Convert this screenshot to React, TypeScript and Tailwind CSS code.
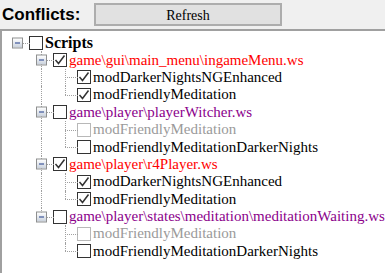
import React from "react";

type Node = {
  label: string;
  checked?: boolean;
  tone?: "red" | "purple" | "gray" | "black";
  children?: Node[];
};

const scripts: Node[] = [
  {
    label: "game\\gui\\main_menu\\ingameMenu.ws",
    checked: true,
    tone: "red",
    children: [
      { label: "modDarkerNightsNGEnhanced", checked: true },
      { label: "modFriendlyMeditation", checked: true },
    ],
  },
  {
    label: "game\\player\\playerWitcher.ws",
    tone: "purple",
    children: [
      { label: "modFriendlyMeditation", tone: "gray" },
      { label: "modFriendlyMeditationDarkerNights" },
    ],
  },
  {
    label: "game\\player\\r4Player.ws",
    checked: true,
    tone: "red",
    children: [
      { label: "modDarkerNightsNGEnhanced", checked: true },
      { label: "modFriendlyMeditation", checked: true },
    ],
  },
  {
    label: "game\\player\\states\\meditation\\meditationWaiting.ws",
    tone: "purple",
    children: [
      { label: "modFriendlyMeditation", tone: "gray" },
      { label: "modFriendlyMeditationDarkerNights" },
    ],
  },
];

const toneClass = {
  red: "text-[#ff0000]",
  purple: "text-[#8b008b]",
  gray: "text-[#9a9a9a]",
  black: "text-black",
};

function Expander() {
  return (
    <div className="flex h-[11px] w-[11px] items-center justify-center border border-[#8e8f8f] bg-gradient-to-b from-white to-[#c9d1dc]">
      <div className="h-px w-[5px] bg-[#1f3a8a]" />
    </div>
  );
}

function Check({ checked, dim }: { checked?: boolean; dim?: boolean }) {
  return (
    <div
      className={`flex h-[14px] w-[14px] shrink-0 items-center justify-center border bg-white ${
        dim ? "border-[#b8b8b8]" : "border-[#333333]"
      }`}
    >
      {checked && (
        <svg width="12" height="12" viewBox="0 0 12 12">
          <path d="M1.5 6 L4.5 9.5 L10.5 1.5" fill="none" stroke="#333" strokeWidth="1.5" />
        </svg>
      )}
    </div>
  );
}

// one 24px indent cell: optional vertical line (full / top half) and horizontal stub
function Cell({
  vert,
  half,
  stub,
  expander,
}: {
  vert?: boolean;
  half?: boolean;
  stub?: boolean;
  expander?: boolean;
}) {
  return (
    <div className="relative h-full w-[24px] shrink-0">
      {vert && (
        <div
          className={`absolute left-[12px] top-0 border-l border-dotted border-[#a0a0a0] ${
            half ? "h-1/2" : "h-full"
          }`}
        />
      )}
      {stub && <div className="absolute left-[12px] top-1/2 w-[13px] border-t border-dotted border-[#a0a0a0]" />}
      {expander && (
        <div className="absolute left-[7px] top-1/2 -translate-y-1/2 bg-white">
          <Expander />
        </div>
      )}
    </div>
  );
}

function Row({ cells, node, bold }: { cells: React.ReactNode; node: Node; bold?: boolean }) {
  const tone = toneClass[node.tone ?? "black"];
  return (
    <div className="flex h-[17.4px] items-center">
      {cells}
      <Check checked={node.checked} dim={node.tone === "gray"} />
      <span className={`ml-[2px] whitespace-nowrap leading-none ${tone} ${bold ? "text-[16px] font-bold" : ""}`}>
        {node.label}
      </span>
    </div>
  );
}

export default function App() {
  return (
    <div className="h-[273px] w-[385px] overflow-hidden bg-white font-['Liberation_Serif',serif] text-[15px]">
      <div className="flex h-[31px] items-center border-b-2 border-[#a0a0a0] bg-[#f0f0f0] pl-[2px]">
        <span className="w-[92px] font-['Liberation_Sans',sans-serif] text-[17px] font-bold text-black">Conflicts:</span>
        <button className="h-[23px] w-[188px] border-2 border-[#adadad] bg-[#e1e1e1] text-[14px] text-black">
          Refresh
        </button>
      </div>
      <div className="h-full border-l-2 border-[#a0a0a0] pl-[3px] pt-[3px]">
        <Row node={{ label: "Scripts" }} bold cells={<Cell stub expander />} />
        {scripts.map((s, i) => {
          const lastFile = i === scripts.length - 1;
          return (
            <React.Fragment key={i}>
              <Row
                node={s}
                cells={
                  <>
                    <Cell />
                    <Cell vert half={lastFile} stub expander />
                  </>
                }
              />
              {s.children?.map((c, j) => {
                const lastChild = j === s.children!.length - 1;
                return (
                  <Row
                    key={j}
                    node={c}
                    cells={
                      <>
                        <Cell />
                        <Cell vert={!lastFile} />
                        <Cell vert half={lastChild} stub />
                      </>
                    }
                  />
                );
              })}
            </React.Fragment>
          );
        })}
      </div>
    </div>
  );
}
